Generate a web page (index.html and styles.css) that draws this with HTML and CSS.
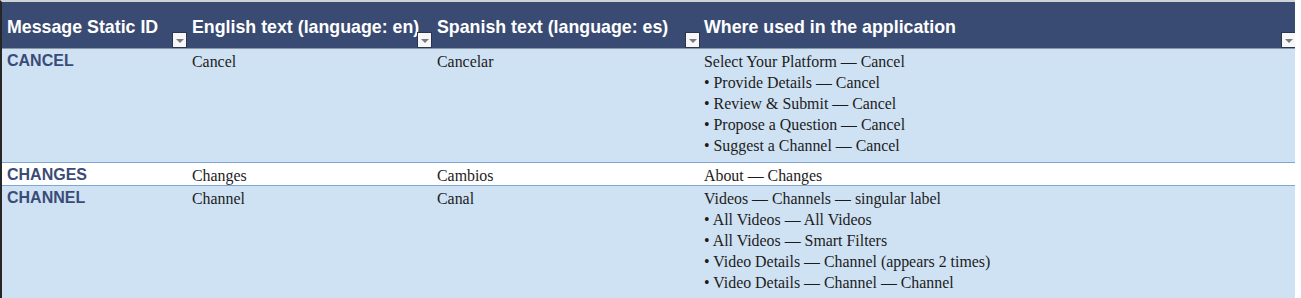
FILE: index.html
```html
<!DOCTYPE html>
<html>
<head>
<meta charset="utf-8">
<link rel="stylesheet" href="styles.css">
</head>
<body>
<div class="sheet">
  <div class="row head">
    <div class="hcell">Message Static ID<span class="dd"></span></div>
    <div class="hcell">English text (language: en)<span class="dd"></span></div>
    <div class="hcell">Spanish text (language: es)<span class="dd"></span></div>
    <div class="hcell">Where used in the application<span class="dd"></span></div>
  </div>
  <div class="row blue tall">
    <div class="cell id">CANCEL</div>
    <div class="cell">Cancel</div>
    <div class="cell">Cancelar</div>
    <div class="cell">Select Your Platform — Cancel<br>• Provide Details — Cancel<br>• Review &amp; Submit — Cancel<br>• Propose a Question — Cancel<br>• Suggest a Channel — Cancel</div>
  </div>
  <div class="row white">
    <div class="cell id">CHANGES</div>
    <div class="cell">Changes</div>
    <div class="cell">Cambios</div>
    <div class="cell">About — Changes</div>
  </div>
  <div class="row blue last">
    <div class="cell id">CHANNEL</div>
    <div class="cell">Channel</div>
    <div class="cell">Canal</div>
    <div class="cell">Videos — Channels — singular label<br>• All Videos — All Videos<br>• All Videos — Smart Filters<br>• Video Details — Channel (appears 2 times)<br>• Video Details — Channel — Channel</div>
  </div>
</div>
</body>
</html>
```
FILE: styles.css
```css
html, body {
  margin: 0;
  padding: 0;
  background: #ffffff;
  overflow: hidden;
  height: 298px;
}
.sheet {
  width: 1295px;
  height: 298px;
  overflow: hidden;
  border-left: 2px solid #262626;
  border-top: 2px solid #cfd2d6;
  box-sizing: border-box;
}
.row {
  display: grid;
  grid-template-columns: 185px 245px 268px 596px;
  border-right: 1px solid #a7b3c6;
  width: 1295px;
  box-sizing: border-box;
}
.head {
  background: #3a4b73;
  height: 47px;
  border-bottom: 1px solid #8a96a6;
}
.hcell {
  position: relative;
  display: flex;
  align-items: center;
  padding: 4px 0 0 5px;
  font-family: "Liberation Sans", Arial, sans-serif;
  font-weight: bold;
  font-size: 17.8px;
  color: #ffffff;
  white-space: nowrap;
}
.hcell:last-child { padding-left: 4px; }
.dd {
  position: absolute;
  right: 0;
  bottom: 0;
  width: 13px;
  height: 14px;
  background: #f7f7f7;
  border: 1px solid #2b3550;
}
.dd::after {
  content: "";
  position: absolute;
  left: 3px;
  top: 6px;
  border-left: 4px solid transparent;
  border-right: 4px solid transparent;
  border-top: 4px solid #7a7a7a;
}
.blue { background: #cfe2f3; }
.white { background: #ffffff; }
.row.blue, .row.white { border-bottom: 1px solid #7ea6d6; }
.row.white { height: 23px; }
.row.last { border-bottom: none; padding-bottom: 40px; }
.cell {
  padding: 2px 0 0 5px;
  font-family: "Liberation Serif", "Times New Roman", serif;
  font-size: 15.9px;
  line-height: 21px;
  color: #1c1c1c;
  white-space: nowrap;
}
.cell:last-child { padding-left: 4px; }
.tall .cell { padding-bottom: 6px; }
.cell.id {
  font-family: "Liberation Sans", Arial, sans-serif;
  font-weight: bold;
  font-size: 16px;
  color: #3b4b78;
  line-height: 20px;
}
```
